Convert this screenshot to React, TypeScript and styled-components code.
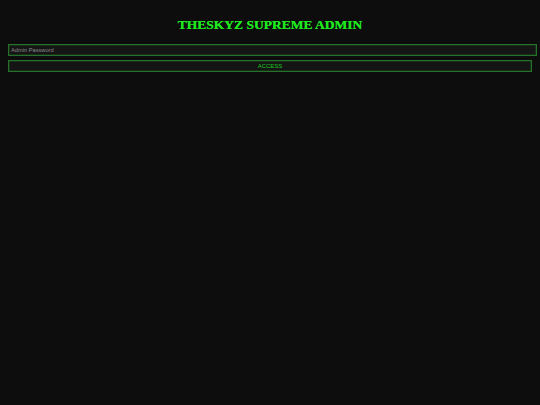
import React from "react";
import styled, { createGlobalStyle } from "styled-components";

const Global = createGlobalStyle`
  html, body {
    margin: 0;
    padding: 0;
    background: #0d0d0d;
  }
  body {
    min-height: 405px;
  }
`;

const Page = styled.div`
  padding: 8px;
  min-height: 405px;
  box-sizing: border-box;
  background: #0d0d0d;
  font-family: "Liberation Sans", Arial, sans-serif;
`;

const Title = styled.h1`
  margin: 9px 0 12px;
  text-align: center;
  font-family: "Liberation Serif", "Times New Roman", serif;
  font-weight: bold;
  font-size: 13.5px;
  line-height: 15px;
  color: #1ee81e;
  text-shadow: 0 0 0.4px #1ee81e;
`;

const Field = styled.input`
  display: block;
  box-sizing: border-box;
  width: 529px;
  height: 12px;
  margin: 0;
  padding: 0 2px;
  border: 1px solid #26722a;
  box-shadow: inset 0 0 0 0.5px #1a4a1a;
  background: #151515;
  color: #cfcfcf;
  font-family: "Liberation Sans", Arial, sans-serif;
  font-size: 5.7px;
  outline: none;
  &::placeholder {
    color: #8a8a8a;
  }
`;

const Button = styled.button`
  display: block;
  box-sizing: border-box;
  width: 524px;
  height: 12px;
  margin: 4px 0 0;
  padding: 0;
  border: 1px solid #26722a;
  box-shadow: inset 0 0 0 0.5px #1a4a1a;
  background: #141414;
  color: #1ec81e;
  font-family: "Liberation Sans", Arial, sans-serif;
  font-size: 6px;
  line-height: 10px;
  cursor: pointer;
`;

export default function App() {
  return (
    <>
      <Global />
      <Page>
        <Title>THESKYZ SUPREME ADMIN</Title>
        <Field type="password" placeholder="Admin Password" />
        <Button>ACCESS</Button>
      </Page>
    </>
  );
}
